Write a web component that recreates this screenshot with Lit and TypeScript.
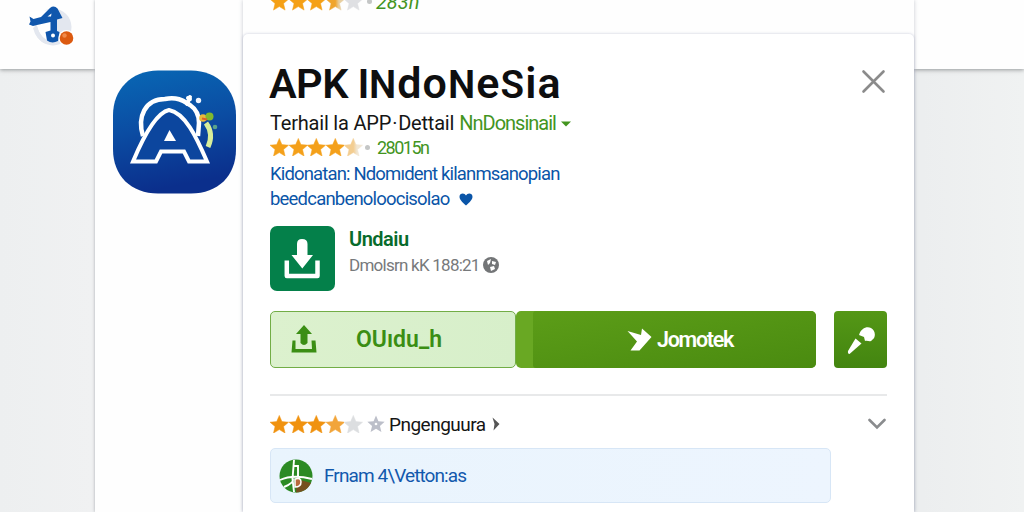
import { LitElement, html, css, svg } from 'lit'

const STAR = 'M10 0.6 L12.7 7 L19.6 7.6 L14.4 12.1 L16 18.9 L10 15.3 L4 18.9 L5.6 12.1 L0.4 7.6 L7.3 7 Z'

class StarRating extends LitElement {
  static properties = {
    colors: { type: Array },
  }

  colors: string[] = []

  static styles = css`
    :host {
      display: flex;
      flex: none;
    }
    .star {
      display: block;
      width: 18.6px;
      height: 18.6px;
    }
  `

  render() {
    return this.colors.map(
      (color, i) => svg`
        <svg class="star" viewBox="0.4 0.2 19.2 19.2">
          <defs>
            <linearGradient id="s${i}">
              <stop offset="0.5" stop-color=${color.split(' ')[0]} />
              <stop offset="0.7" stop-color=${color.split(' ')[1] ?? color} />
            </linearGradient>
          </defs>
          <path d=${STAR} fill="url(#s${i})" stroke="url(#s${i})" stroke-width="0.5" />
        </svg>
      `
    )
  }
}

customElements.define('star-rating', StarRating)

class AppRoot extends LitElement {
  static styles = css`
    :host {
      display: block;
      height: 512px;
      overflow: hidden;
      font-family: Roboto, 'Liberation Sans', sans-serif;
      color: #151515;
      background: linear-gradient(90deg, #edeff0, #f0f1f2 9%, #eceeef 90%, #f0f2f2);
    }
    * {
      box-sizing: border-box;
    }
    svg {
      display: block;
      flex: none;
    }
    .page {
      display: grid;
      grid-template-columns: 95px 148px 671px 1fr;
      height: 512px;
    }
    .bar {
      height: 69px;
      background: #fefefe;
      box-shadow: 0 1px 4px rgba(60, 64, 67, 0.5);
    }
    .brand {
      padding: 4px 0 0 26px;
    }
    .side {
      position: relative;
      background: #fefefe;
      box-shadow: 0 0 3px rgba(60, 70, 80, 0.4);
      padding: 70px 0 0 17px;
    }
    .main {
      position: relative;
      display: flex;
      flex-direction: column;
      background: #fefefe;
      box-shadow: 0 0 4px rgba(70, 80, 100, 0.3);
    }
    .previous {
      display: flex;
      flex: none;
      height: 34px;
      padding-left: 27px;
      overflow: hidden;
    }
    .previous star-rating {
      margin-top: -8px;
    }
    .previous .dot {
      margin: -1px 4px 0 4px;
    }
    .previous .count {
      font-style: italic;
      font-size: 20px;
      line-height: 22px;
      margin-top: -9px;
    }
    .card {
      flex: 1;
      padding: 26px 27px 0;
      background: #fff;
      border-radius: 5px 5px 0 0;
      box-shadow: 0 0 3px rgba(80, 90, 140, 0.32);
    }
    .row {
      display: flex;
      align-items: center;
      white-space: nowrap;
    }
    .title {
      justify-content: space-between;
      height: 48px;
    }
    h1 {
      margin: -1px 0 0 -1px;
      font-size: 41.5px;
      line-height: 48px;
      font-weight: 600;
      color: #0e0e0f;
      letter-spacing: -0.6px;
    }
    h1 .wide {
      font-size: 43px;
      letter-spacing: 1.1px;
    }
    h1 .small {
      font-size: 38.5px;
    }
    .close {
      margin: -5px 1px 0 0;
    }
    .subtitle {
      height: 30px;
      font-size: 20px;
    }
    .green {
      color: #43951f;
    }
    .subtitle .sep {
      margin: 0 1px;
    }
    .subtitle .green {
      margin-left: 5px;
    }
    .subtitle svg {
      margin: 2px 0 0 5px;
    }
    .rating {
      height: 20px;
      margin-top: -1px;
      font-size: 18px;
    }
    .dot {
      width: 5px;
      height: 5px;
      margin: 0 7px 0 2px;
      border-radius: 50%;
      background: #c4c6c6;
    }
    .count {
      color: #43951f;
    }
    .links {
      margin-top: 5px;
      font-size: 18.5px;
      line-height: 25px;
      color: #0a55a8;
    }
    .links .row {
      height: 25px;
    }
    .links svg {
      margin-left: 9px;
    }
    .app {
      height: 65px;
      margin-top: 14px;
      gap: 14px;
      align-items: flex-start;
    }
    .tile {
      display: flex;
      width: 65px;
      height: 65px;
      border-radius: 7px;
      background: #04804a;
    }
    .app-name {
      font-size: 20px;
      line-height: 26px;
      font-weight: 600;
      color: #086b2c;
    }
    .meta {
      height: 26px;
      font-size: 17px;
      color: #77797b;
      gap: 3px;
    }
    .actions {
      height: 57px;
      margin-top: 19.5px;
    }
    .upload {
      display: flex;
      align-items: center;
      width: 246px;
      height: 57px;
      padding-left: 20px;
      gap: 39px;
      border: 1.5px solid #72ad46;
      border-radius: 5px;
      background: linear-gradient(100deg, #dcf1ce, #d7efca);
      color: #3b8e14;
      font-size: 23px;
      font-weight: 600;
    }
    .install {
      width: 300px;
      height: 57px;
      padding-left: 17px;
      border-radius: 5px;
      background: #69a823;
    }
    .install-face {
      display: flex;
      align-items: center;
      height: 57px;
      padding-left: 94px;
      gap: 5px;
      border-radius: 3px 5px 5px 3px;
      background: linear-gradient(170deg, #5c9d18, #4a8b10);
      color: #fff;
      font-size: 21.5px;
      font-weight: 600;
    }
    .tool {
      width: 53px;
      height: 57px;
      margin-left: 18px;
      border-radius: 4px;
      background: linear-gradient(#549716, #438510);
    }
    .rule {
      height: 2px;
      margin-top: 26.5px;
      background: #e8e9ea;
    }
    .reviews {
      height: 30px;
      margin-top: 13px;
      font-size: 19px;
    }
    .reviews .gray {
      margin: 0 4px 0 4px;
    }
    .reviews .more {
      margin-left: 6px;
    }
    .reviews .down {
      margin-left: auto;
      margin-right: 1px;
    }
    .notice {
      width: 561px;
      height: 55px;
      margin-top: 9px;
      padding-left: 8px;
      gap: 11px;
      border: 1.5px solid #d7e6f6;
      border-radius: 5px;
      background: linear-gradient(90deg, #e9f4fd, #edf5fe);
      color: #1259ad;
      font-size: 19px;
    }
    .t-sub { letter-spacing: -0.2px; }
    .t-owner { letter-spacing: -1px; }
    .t-count { letter-spacing: -1.5px; }
    .t-link1 { letter-spacing: -0.85px; }
    .t-link2 { letter-spacing: -0.8px; }
    .t-name { letter-spacing: -0.5px; }
    .t-meta { letter-spacing: -0.75px; }
    .t-install { letter-spacing: -1.3px; }
    .t-reviews { letter-spacing: -0.5px; }
    .t-notice { letter-spacing: -0.9px; }
  `

  render() {
    return html`
      <div class="page">
        <div class="bar brand">
          <svg width="50" height="44" viewBox="0 0 50 44">
            <circle cx="27" cy="23" r="18.5" fill="#e3e7ef" />
            <path d="M4 8 L24 6 L26 38 Q14 35 11 22Z" fill="#fff" />
            <path d="M7 24 Q10 36 20 40 L20 36 Q13 31 11 22Z" fill="#e3e7ef" />
            <path
              d="M3.5 12.5 L7.5 15 L15 13 L24 4 Q28 1 31.5 4.5 L36.5 14 L31 15.5 L31 27 L33.5 28 L32 37 Q26 40 21 36.5 L19.5 28 L24.5 26.5 L24.5 18 L11 21 L7 22 L3 20.5 L4.5 17.5 Z"
              fill="#1057ad"
            />
            <path d="M21.5 12.5 L25.5 9.5 L25 12.5Z" fill="#fff" />
            <circle cx="27" cy="31.5" r="2" fill="#fff" />
            <circle cx="40.5" cy="34" r="8" fill="#fff" />
            <circle cx="40.5" cy="34" r="6.8" fill="#dc5a10" />
            <circle cx="38.5" cy="31.5" r="2.2" fill="#f08a49" />
          </svg>
        </div>
        <div class="side">
          <svg width="126" height="124" viewBox="0 0 126 124">
            <defs>
              <linearGradient id="blue" x1="0" y1="0" x2="0.2" y2="1">
                <stop offset="0" stop-color="#0868b5" />
                <stop offset="0.5" stop-color="#0b4da3" />
                <stop offset="1" stop-color="#0b2f8c" />
              </linearGradient>
            </defs>
            <path
              d="M46 0.5 H79 C106 0.5 124 20 124 45 V79 C124 106 106 123.5 79 123.5 H46 C19 123.5 1 106 1 79 V45 C1 20 19 0.5 46 0.5Z"
              fill="url(#blue)"
            />
            <path
              d="M31 66 C25 47 33 29 53 29 C66 26 73 32 78 35 C84 39 87 46 87 53 L86 66"
              fill="none"
              stroke="#fff"
              stroke-width="4.5"
            />
            <path
              d="M21 91.5 C30 70 43 43 57 40 C73 43 84 66 95 91.5 H77 L72 81.5 H49 L44 91.5 Z"
              fill="#0c469e"
              stroke="#fff"
              stroke-width="4"
            />
            <path d="M57.5 60 L64 71 H52Z" fill="#fff" />
            <path d="M75 34 L78 27 M76 28 L78 29" stroke="#fff" stroke-width="4" stroke-linecap="round" />
            <circle cx="86.5" cy="30.5" r="2.7" fill="#eef4ff" />
            <path d="M94 53 Q102 64 96 77" fill="none" stroke="#d8ee9a" stroke-width="5" />
            <circle cx="91" cy="48" r="3.8" fill="#e9b93c" />
            <circle cx="97.5" cy="46.5" r="4" fill="#80b92e" />
            <path d="M90 48.5 L95 49.5" stroke="#d9602c" stroke-width="2" />
            <circle cx="103" cy="57" r="2.3" fill="#5aa38c" />
          </svg>
        </div>
        <div class="main">
          <div class="previous">
            <star-rating .colors=${['#f5a015', '#f5a015', '#f5a015', '#f0a52c #e8cfa0', '#dfe0e3']}></star-rating>
            <span class="dot"></span>
            <span class="count">283n</span>
          </div>
          <div class="card">
            <div class="row title">
              <h1>APK I<span class="wide"><span class="small">N</span>do<span class="small">N</span>e<span class="small">S</span>ia</span></h1>
              <svg class="close" width="25" height="25" viewBox="0 0 25 25">
                <path d="M2.5 2.5 L22.5 22.5 M22.5 2.5 L2.5 22.5" stroke="#8b8b8b" stroke-width="2.6" stroke-linecap="round" />
              </svg>
            </div>
            <div class="row subtitle">
              <span class="t-sub">Terhail la APP<span class="sep">·</span>Dettail</span>
              <span class="green t-owner">NnDonsinail</span>
              <svg width="10" height="6" viewBox="0 0 10 6"><path d="M0 0.5 H10 L5 5.5Z" fill="#43951f" /></svg>
            </div>
            <div class="row rating">
              <star-rating .colors=${['#f4a01a', '#f4a01a', '#f4a01a', '#f4a01a', '#f3cd91 #f1e6d3']}></star-rating>
              <span class="dot"></span>
              <span class="count t-count">28015n</span>
            </div>
            <div class="links">
              <div class="row t-link1">Kidonatan: Ndomıdent kilanmsanopian</div>
              <div class="row">
                <span class="t-link2">beedcanbenoloocisolao</span>
                <svg width="14" height="13" viewBox="0 0 14 13">
                  <path d="M7 12.6 C3 9 0.5 6.5 0.5 3.8 C0.5 0 5.5 -0.6 7 2.6 C8.5 -0.6 13.5 0 13.5 3.8 C13.5 6.5 11 9 7 12.6Z" fill="#0a55a8" />
                </svg>
              </div>
            </div>
            <div class="row app">
              <div class="tile">
                <svg width="65" height="65" viewBox="0 0 65 65">
                  <path d="M27 18 Q27 13 32 13 Q37.5 13 37.5 18 V29 H43 L32.3 42.5 L21.5 29 H27Z" fill="#fff" />
                  <path d="M16.8 34.5 V50 H47.5 V34.5" fill="none" stroke="#fff" stroke-width="4.5" stroke-linejoin="round" />
                </svg>
              </div>
              <div>
                <div class="app-name t-name">Undaiu</div>
                <div class="row meta">
                  <span class="t-meta">Dmolsrn kK 188:21</span>
                  <svg width="16" height="16" viewBox="0 0 16 16">
                    <circle cx="8" cy="8" r="8" fill="#737577" />
                    <path d="M4 4 L8 2 L7 6 L5 8Z M9 4 L13 5 L12 8 L9 7Z M7 10 L11 9 L12 12 L8 14Z" fill="#fff" />
                  </svg>
                </div>
              </div>
            </div>
            <div class="row actions">
              <div class="upload">
                <svg width="26" height="28" viewBox="0 0 26 28">
                  <path d="M13 0 L21 9 H16.5 V18 Q13 22 9.5 18 V9 H5Z" fill="#3b8e14" />
                  <path d="M0.5 27.5 L1.5 15.5 H4.5 V24 H21 L20.5 15.5 H24.5 L25.5 27.5Z" fill="#3b8e14" />
                </svg>
                <span>OUıdu_h</span>
              </div>
              <div class="install">
                <div class="install-face">
                  <svg width="25" height="23" viewBox="0 0 25 23">
                    <path d="M0.5 3 L14 7 L15 0.5 L24.5 9 L12.5 22.5 H3.5 L10 13.5Z" fill="#fff" />
                  </svg>
                  <span class="t-install">Jomotek</span>
                </div>
              </div>
              <div class="tool">
                <svg width="53" height="57" viewBox="0 0 53 57">
                  <path d="M25 24 C27 17 33 15 37 17 C42 20 42 27 38 29 C36 32 34 29 31 30 L30 26Z" fill="#fff" />
                  <path d="M21.5 27.5 L27.5 32.5 L15.5 43 Q13.5 43 14 40Z" fill="#fff" />
                </svg>
              </div>
            </div>
            <div class="rule"></div>
            <div class="row reviews">
              <star-rating .colors=${['#f0920f', '#f0920f', '#f0920f', '#f2a53a', '#dcdee0']}></star-rating>
              <svg class="gray" width="18" height="18" viewBox="0 0 20 20">
                <path d=${STAR} fill="#bcbfc9" />
                <circle cx="10" cy="10" r="1.5" fill="#fff" />
              </svg>
              <span class="t-reviews">Pngenguura</span>
              <svg class="more" width="8" height="14" viewBox="0 0 8 14"><path d="M0.5 0.5 L7.5 7 L1.5 13.5 L2.5 7Z" fill="#555" /></svg>
              <svg class="down" width="18" height="12" viewBox="0 0 18 12">
                <path d="M1.5 2 L9 9.5 L16.5 2" fill="none" stroke="#8a8c8e" stroke-width="2.6" stroke-linecap="round" />
              </svg>
            </div>
            <div class="row notice">
              <svg width="34" height="34" viewBox="0 0 34 34">
                <circle cx="17" cy="17" r="16.5" fill="#2c8a24" />
                <path d="M17 33.5 C24 33.5 30 29 32 24 L18 20Z" fill="#75501f" />
                <path
                  d="M15 1 L13.5 20 M15 7 H19 V18 M1 21 Q14 15 33 20 M5 28 Q15 24 14 20 M13.5 20 L15 33"
                  fill="none"
                  stroke="#fff"
                  stroke-width="1.9"
                />
                <path d="M16 20 Q22 18 22 23 Q22 28 16 28Z" fill="#b86a3c" stroke="#fff" stroke-width="1.5" />
              </svg>
              <span class="t-notice">Frnam 4\\Vetton:as</span>
            </div>
          </div>
        </div>
        <div class="bar"></div>
      </div>
    `
  }
}

customElements.define('app-root', AppRoot)
